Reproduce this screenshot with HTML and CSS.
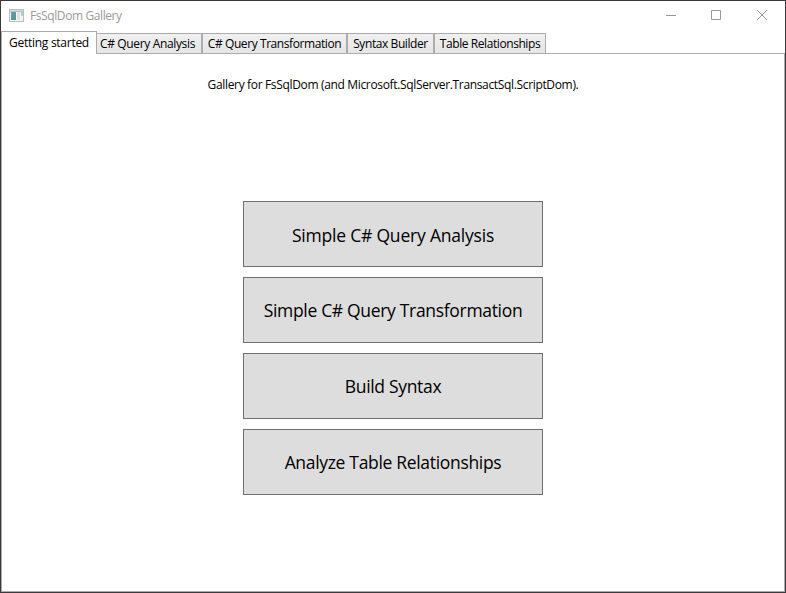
FILE: index.html
```html
<!DOCTYPE html>
<html lang="en">
<head>
<meta charset="utf-8">
<title>FsSqlDom Gallery</title>
<link rel="stylesheet" href="styles.css">
</head>
<body>
<div class="window">
  <header class="titlebar">
    <svg class="app-icon" width="15" height="13" viewBox="0 0 15 13" shape-rendering="crispEdges">
      <defs>
        <linearGradient id="pane" x1="0" y1="0" x2="1" y2="1">
          <stop offset="0" stop-color="#6c98c4"/>
          <stop offset="1" stop-color="#4c9a78"/>
        </linearGradient>
      </defs>
      <path fill="#b9bcc0" d="M0 0h15v13H0z"/>
      <path fill="#d9dcdf" d="M1 1h13v1H1z"/>
      <path fill="#f5f6f6" d="M1 3h13v9H1z"/>
      <path fill="url(#pane)" d="M2 3h5v8H2z"/>
      <path fill="#dfe1e3" d="M8 3h3v8H8z"/>
      <path fill="#a7c8d8" d="M12 3h2v2h-2z"/>
      <path fill="#a9d5ae" d="M12 5h2v2h-2z"/>
    </svg>
    <span class="title">FsSqlDom Gallery</span>
    <svg class="controls" width="102" height="12" viewBox="0 0 102 12" fill="none" stroke="#999">
      <path d="M0 6.500h10M45.500 1.500h9v9h-9z"/>
      <path d="M91 1l10 10M101 1L91 11"/>
    </svg>
  </header>
  <nav class="tabs">
    <div class="tab active"><span>Getting started</span></div>
    <div class="tab analysis"><span>C# Query Analysis</span></div>
    <div class="tab transformation"><span>C# Query Transformation</span></div>
    <div class="tab builder"><span>Syntax Builder</span></div>
    <div class="tab relationships"><span>Table Relationships</span></div>
  </nav>
  <main class="page">
    <p class="intro">Gallery for FsSqlDom (and Microsoft.SqlServer.TransactSql.ScriptDom).</p>
    <div class="actions">
      <button class="first">Simple C# Query Analysis</button>
      <button>Simple C# Query Transformation</button>
      <button>Build Syntax</button>
      <button>Analyze Table Relationships</button>
    </div>
  </main>
</div>
</body>
</html>
```
FILE: styles.css
```css
* { box-sizing: border-box; }
body { margin: 0; background: #fff; font-family: "Open Sans", "Noto Sans", sans-serif; font-size: 12px; color: #000; }
.window { width: 786px; height: 593px; border: 1px solid #3b393c; display: flex; flex-direction: column; background: #fff; }
.titlebar { height: 30px; flex: none; display: flex; align-items: center; padding: 0 17px 2px 8px; color: #999; }
.title { margin-left: 6px; line-height: 16px; letter-spacing: -0.4px; padding-top: 2px; }
.controls { margin-left: auto; }
.tabs { height: 23px; flex: none; display: flex; align-items: flex-end; position: relative; z-index: 1; }
.tab { height: 20px; margin-bottom: 1px; border: 1px solid #acacac; border-bottom: 0; background: linear-gradient(#f0f0f0, #e5e5e5); display: flex; justify-content: center; align-items: center; line-height: 16px; padding-top: 1px; white-space: nowrap; letter-spacing: -0.42px; }
.active { width: 96px; height: 23px; margin-bottom: 0; padding: 0 0 1px; background: #fff; z-index: 1; letter-spacing: -0.27px; }
.analysis { width: 106px; margin-left: -1px; padding-right: 3px; letter-spacing: -0.35px; }
.transformation { width: 145px; }
.builder { width: 87px; }
.relationships { width: 112px; }
.page { flex: 1; border: 1px solid #acacac; margin-top: -1px; display: flex; flex-direction: column; align-items: center; }
.intro { margin: 23px 0 0; line-height: 16px; letter-spacing: -0.34px; }
.actions { margin-top: 108px; display: grid; gap: 10px; }
button { width: 300px; height: 66px; padding: 0; border: 1px solid #707070; background: #ddd; color: #000; font: 17.5px/24px "Open Sans", "Noto Sans", sans-serif; letter-spacing: -0.32px; }
.first { padding-top: 2px; letter-spacing: -0.2px; }
```
